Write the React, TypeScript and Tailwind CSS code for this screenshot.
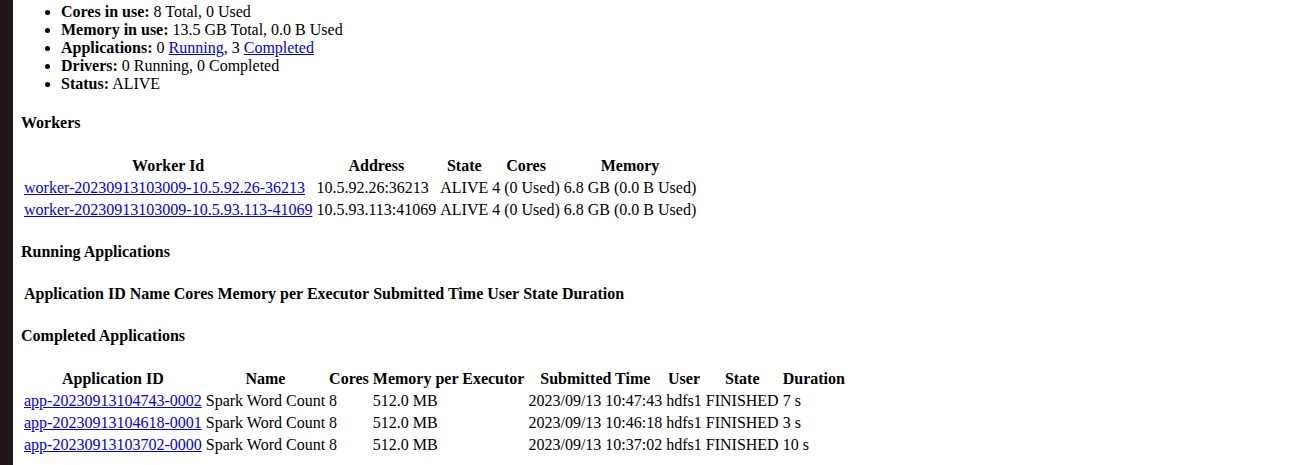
import React from "react";

const link = "text-[#0000ee] underline";
const th = "p-px font-bold text-center align-middle";
const td = "p-px text-left align-middle";
const h4 = "font-bold my-[21.28px]";

export default function App() {
  const workers = [
    ["worker-20230913103009-10.5.92.26-36213", "10.5.92.26:36213"],
    ["worker-20230913103009-10.5.93.113-41069", "10.5.93.113:41069"],
  ];
  const apps = [
    ["app-20230913104743-0002", "2023/09/13 10:47:43", "7 s"],
    ["app-20230913104618-0001", "2023/09/13 10:46:18", "3 s"],
    ["app-20230913103702-0000", "2023/09/13 10:37:02", "10 s"],
  ];
  return (
    <div className="flex h-[465px] overflow-hidden bg-white text-black text-[16px] leading-[normal] font-['Liberation_Serif',serif]">
      <div className="w-[13px] shrink-0 bg-[#201418]" />
      <div className="flex-1 pl-2 pt-[3px]">
        <ul className="list-disc pl-10 mb-4">
          <li><strong>Cores in use:</strong> 8 Total, 0 Used</li>
          <li><strong>Memory in use:</strong> 13.5 GB Total, 0.0 B Used</li>
          <li>
            <strong>Applications:</strong> 0 <a className={link} href="#running-app">Running</a>, 3{" "}
            <a className={link} href="#completed-app">Completed</a>
          </li>
          <li><strong>Drivers:</strong> 0 Running, 0 Completed</li>
          <li><strong>Status:</strong> ALIVE</li>
        </ul>

        <h4 className={h4}>Workers</h4>
        <table className="border-separate border-spacing-[2px]">
          <thead>
            <tr>
              <th className={th}>Worker Id</th>
              <th className={th}>Address</th>
              <th className={th}>State</th>
              <th className={th}>Cores</th>
              <th className={th}>Memory</th>
            </tr>
          </thead>
          <tbody>
            {workers.map(([id, addr]) => (
              <tr key={id}>
                <td className={td}><a className={link} href="#">{id}</a></td>
                <td className={td}>{addr}</td>
                <td className={td}>ALIVE</td>
                <td className={td}>4 (0 Used)</td>
                <td className={td}>6.8 GB (0.0 B Used)</td>
              </tr>
            ))}
          </tbody>
        </table>

        <h4 className={h4}>Running Applications</h4>
        <table className="border-separate border-spacing-[2px]">
          <thead>
            <tr>
              <th className={th}>Application ID</th>
              <th className={th}>Name</th>
              <th className={th}>Cores</th>
              <th className={th}>Memory per Executor</th>
              <th className={th}>Submitted Time</th>
              <th className={th}>User</th>
              <th className={th}>State</th>
              <th className={th}>Duration</th>
            </tr>
          </thead>
          <tbody />
        </table>

        <h4 className={h4}>Completed Applications</h4>
        <table className="border-separate border-spacing-[2px]">
          <thead>
            <tr>
              <th className={th}>Application ID</th>
              <th className={th}>Name</th>
              <th className={th}>Cores</th>
              <th className={th}>Memory per Executor</th>
              <th className={th}>Submitted Time</th>
              <th className={th}>User</th>
              <th className={th}>State</th>
              <th className={th}>Duration</th>
            </tr>
          </thead>
          <tbody>
            {apps.map(([id, time, dur]) => (
              <tr key={id}>
                <td className={td}><a className={link} href="#">{id}</a></td>
                <td className={td}>Spark Word Count</td>
                <td className={td}>8</td>
                <td className={td}>512.0 MB</td>
                <td className={td}>{time}</td>
                <td className={td}>hdfs1</td>
                <td className={td}>FINISHED</td>
                <td className={td}>{dur}</td>
              </tr>
            ))}
          </tbody>
        </table>
      </div>
    </div>
  );
}
